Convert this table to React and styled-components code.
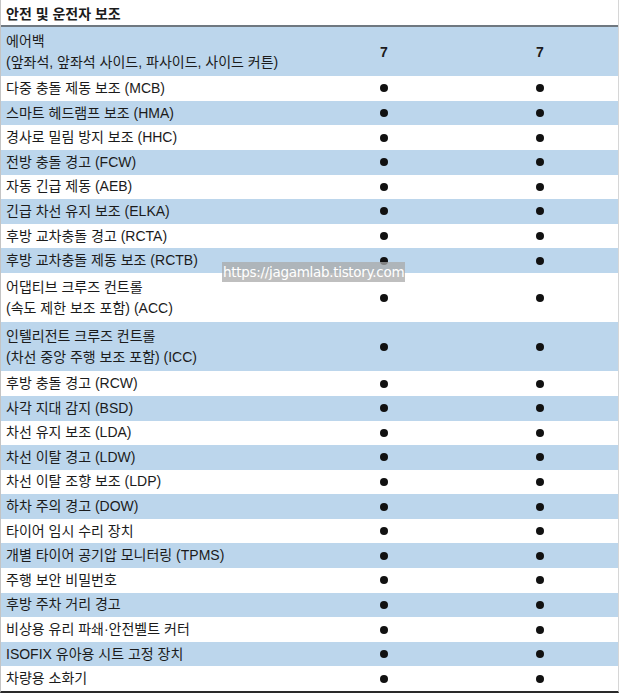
import React from "react"
import styled, { createGlobalStyle } from "styled-components"

const Global = createGlobalStyle`
  html, body {
    margin: 0;
    padding: 0;
    background: #ffffff;
  }
  body {
    font-family: "Liberation Sans", "Noto Sans CJK KR", sans-serif;
    color: #1b1b1b;
  }
`

const Sheet = styled.div`
  position: relative;
  width: 619px;
  border-left: 1px solid #c4c4c4;
  border-right: 1px solid #d6d6d6;
  border-bottom: 2px solid #2a2a2a;
  box-sizing: border-box;
`

const Title = styled.div`
  height: 25px;
  display: flex;
  align-items: center;
  padding-left: 5px;
  font-size: 14px;
  font-weight: 700;
  border-bottom: 2px solid #6f7880;
`

const Row = styled.div`
  display: grid;
  grid-template-columns: 305px 156px 156px;
  align-items: center;
  height: ${(p) => (p.$tall ? "49.2px" : "24.6px")};
  background: ${(p) => (p.$shade ? "#bcd6ec" : "#ffffff")};
`

const Label = styled.div`
  padding-left: 5px;
  font-size: 14px;
  line-height: 21px;
  white-space: pre-line;
`

const Value = styled.div`
  display: flex;
  justify-content: center;
  align-items: center;
  font-size: 14px;
  font-weight: 600;
`

const Dot = styled.span`
  width: 8px;
  height: 8px;
  border-radius: 50%;
  background: #111111;
`

const Watermark = styled.div`
  position: absolute;
  left: 221px;
  top: 262px;
  padding: 0 1px;
  height: 20px;
  line-height: 20px;
  font-size: 13.5px;
  color: #ffffff;
  background: rgba(170, 170, 170, 0.75);
  font-family: "DejaVu Sans", "Liberation Sans", sans-serif;
  letter-spacing: -0.3px;
`

const rows = [
  ["에어백\n(앞좌석, 앞좌석 사이드, 파사이드, 사이드 커튼)", "7"],
  ["다중 충돌 제동 보조 (MCB)"],
  ["스마트 헤드램프 보조 (HMA)"],
  ["경사로 밀림 방지 보조 (HHC)"],
  ["전방 충돌 경고 (FCW)"],
  ["자동 긴급 제동 (AEB)"],
  ["긴급 차선 유지 보조 (ELKA)"],
  ["후방 교차충돌 경고 (RCTA)"],
  ["후방 교차충돌 제동 보조 (RCTB)"],
  ["어댑티브 크루즈 컨트롤\n(속도 제한 보조 포함) (ACC)"],
  ["인텔리전트 크루즈 컨트롤\n(차선 중앙 주행 보조 포함) (ICC)"],
  ["후방 충돌 경고 (RCW)"],
  ["사각 지대 감지 (BSD)"],
  ["차선 유지 보조 (LDA)"],
  ["차선 이탈 경고 (LDW)"],
  ["차선 이탈 조향 보조 (LDP)"],
  ["하차 주의 경고 (DOW)"],
  ["타이어 임시 수리 장치"],
  ["개별 타이어 공기압 모니터링 (TPMS)"],
  ["주행 보안 비밀번호"],
  ["후방 주차 거리 경고"],
  ["비상용 유리 파쇄·안전벨트 커터"],
  ["ISOFIX 유아용 시트 고정 장치"],
  ["차량용 소화기"],
]

const Cell = ({ value }) => (
  <Value>{value ? value : <Dot />}</Value>
)

const App = () => {
  return (
    <>
      <Global />
      <Sheet>
        <Title>안전 및 운전자 보조</Title>
        {rows.map(([label, value], i) => (
          <Row key={i} $shade={i % 2 === 0} $tall={label.includes("\n")}>
            <Label>{label}</Label>
            <Cell value={value} />
            <Cell value={value} />
          </Row>
        ))}
        <Watermark>https://jagamlab.tistory.com</Watermark>
      </Sheet>
    </>
  )
}

export default App
